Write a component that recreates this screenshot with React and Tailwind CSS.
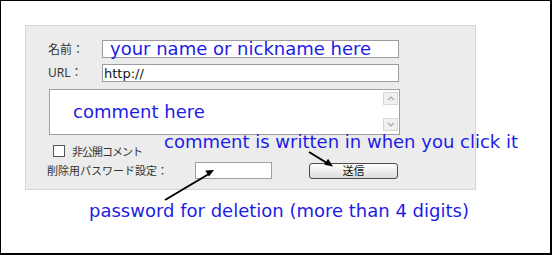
import React from "react";

const blue = "text-[#1c1ce6]";
const ann = `absolute whitespace-nowrap text-[18px] leading-[18px] ${blue} [font-family:'DejaVu_Sans',sans-serif]`;

export default function App() {
  return (
    <div className="relative w-[552px] h-[255px] box-border bg-white border-l border-t border-r-2 border-b-2 border-black overflow-hidden [font-family:'Noto_Sans_CJK_JP','Noto_Sans',sans-serif]">
      {/* form panel */}
      <div className="ml-[24px] mt-[24px] w-[451px] h-[165px] box-border border border-[#d6d6d6] bg-[#ececec] pl-[22px] pt-[14px] text-[#333]">
        <div className="flex items-center h-[18px]">
          <div className="w-[54px] text-[12px] leading-none">名前：</div>
          <div className="w-[297px] h-[18px] box-border border border-[#9c9c9c] bg-white" />
        </div>
        <div className="flex items-center h-[18px] mt-[6px]">
          <div className="w-[54px] text-[12px] leading-none [font-family:'Noto_Sans','Noto_Sans_CJK_JP',sans-serif]">URL：</div>
          <div className="w-[297px] h-[18px] box-border border border-[#9c9c9c] bg-white flex items-center pl-[1px] text-[13px] leading-none text-[#111] [font-family:'DejaVu_Sans',sans-serif]">
            http://
          </div>
        </div>
        <div className="mt-[7px] ml-[1px] w-[351px] h-[46px] box-border border border-[#a0a0a0] bg-white flex justify-end pr-[1px] pt-[2px]">
          <div className="w-[15px] flex flex-col justify-between pb-[3px]">
            <div className="h-[13px] box-border border border-[#d8d8d8] bg-[#f0f0f0] flex items-center justify-center">
              <svg width="8" height="5" viewBox="0 0 8 5"><path d="M1 4 L4 1 L7 4" fill="none" stroke="#a8a8a8" strokeWidth="1.2" /></svg>
            </div>
            <div className="h-[13px] box-border border border-[#d8d8d8] bg-[#f0f0f0] flex items-center justify-center">
              <svg width="8" height="5" viewBox="0 0 8 5"><path d="M1 1 L4 4 L7 1" fill="none" stroke="#a8a8a8" strokeWidth="1.2" /></svg>
            </div>
          </div>
        </div>
        <div className="flex items-center mt-[10px] ml-[5px] h-[12px]">
          <div className="w-[12px] h-[12px] box-border border border-[#555] bg-white" />
          <div className="ml-[7px] text-[11px] leading-none tracking-[-1px]">非公開コメント</div>
        </div>
        <div className="flex items-center mt-[5px] h-[17px]">
          <div className="w-[148px] text-[11px] leading-none -ml-[1px]">削除用パスワード設定：</div>
          <div className="w-[77px] h-[17px] box-border border border-[#a0a0a0] bg-white" />
          <div className="ml-[37px] w-[89px] h-[16px] box-border border border-[#4a4a4a] rounded-[3px] bg-gradient-to-b from-white to-[#dcdcdc] flex items-center justify-center text-[11px] leading-none text-[#111]">
            送信
          </div>
        </div>
      </div>

      {/* annotations */}
      <div className={`${ann} left-[109px] top-[39px]`}>your name or nickname here</div>
      <div className={`${ann} left-[72px] top-[102px]`}>comment here</div>
      <div className={`${ann} left-[163px] top-[132px]`}>comment is written in when you click it</div>
      <div className={`${ann} left-[88px] top-[201px]`}>password for deletion (more than 4 digits)</div>

      <svg className="absolute left-[-1px] top-[-1px] pointer-events-none" width="552" height="255" viewBox="0 0 552 255">
        <line x1="165" y1="200" x2="208" y2="174.5" stroke="#000" strokeWidth="2" />
        <polygon points="214,170 208.9,176.6 205.3,170.6" fill="#000" />
        <line x1="309" y1="152" x2="327" y2="163" stroke="#000" strokeWidth="2" />
        <polygon points="333,166.5 324.3,164.7 328.1,158.8" fill="#000" />
      </svg>
    </div>
  );
}
